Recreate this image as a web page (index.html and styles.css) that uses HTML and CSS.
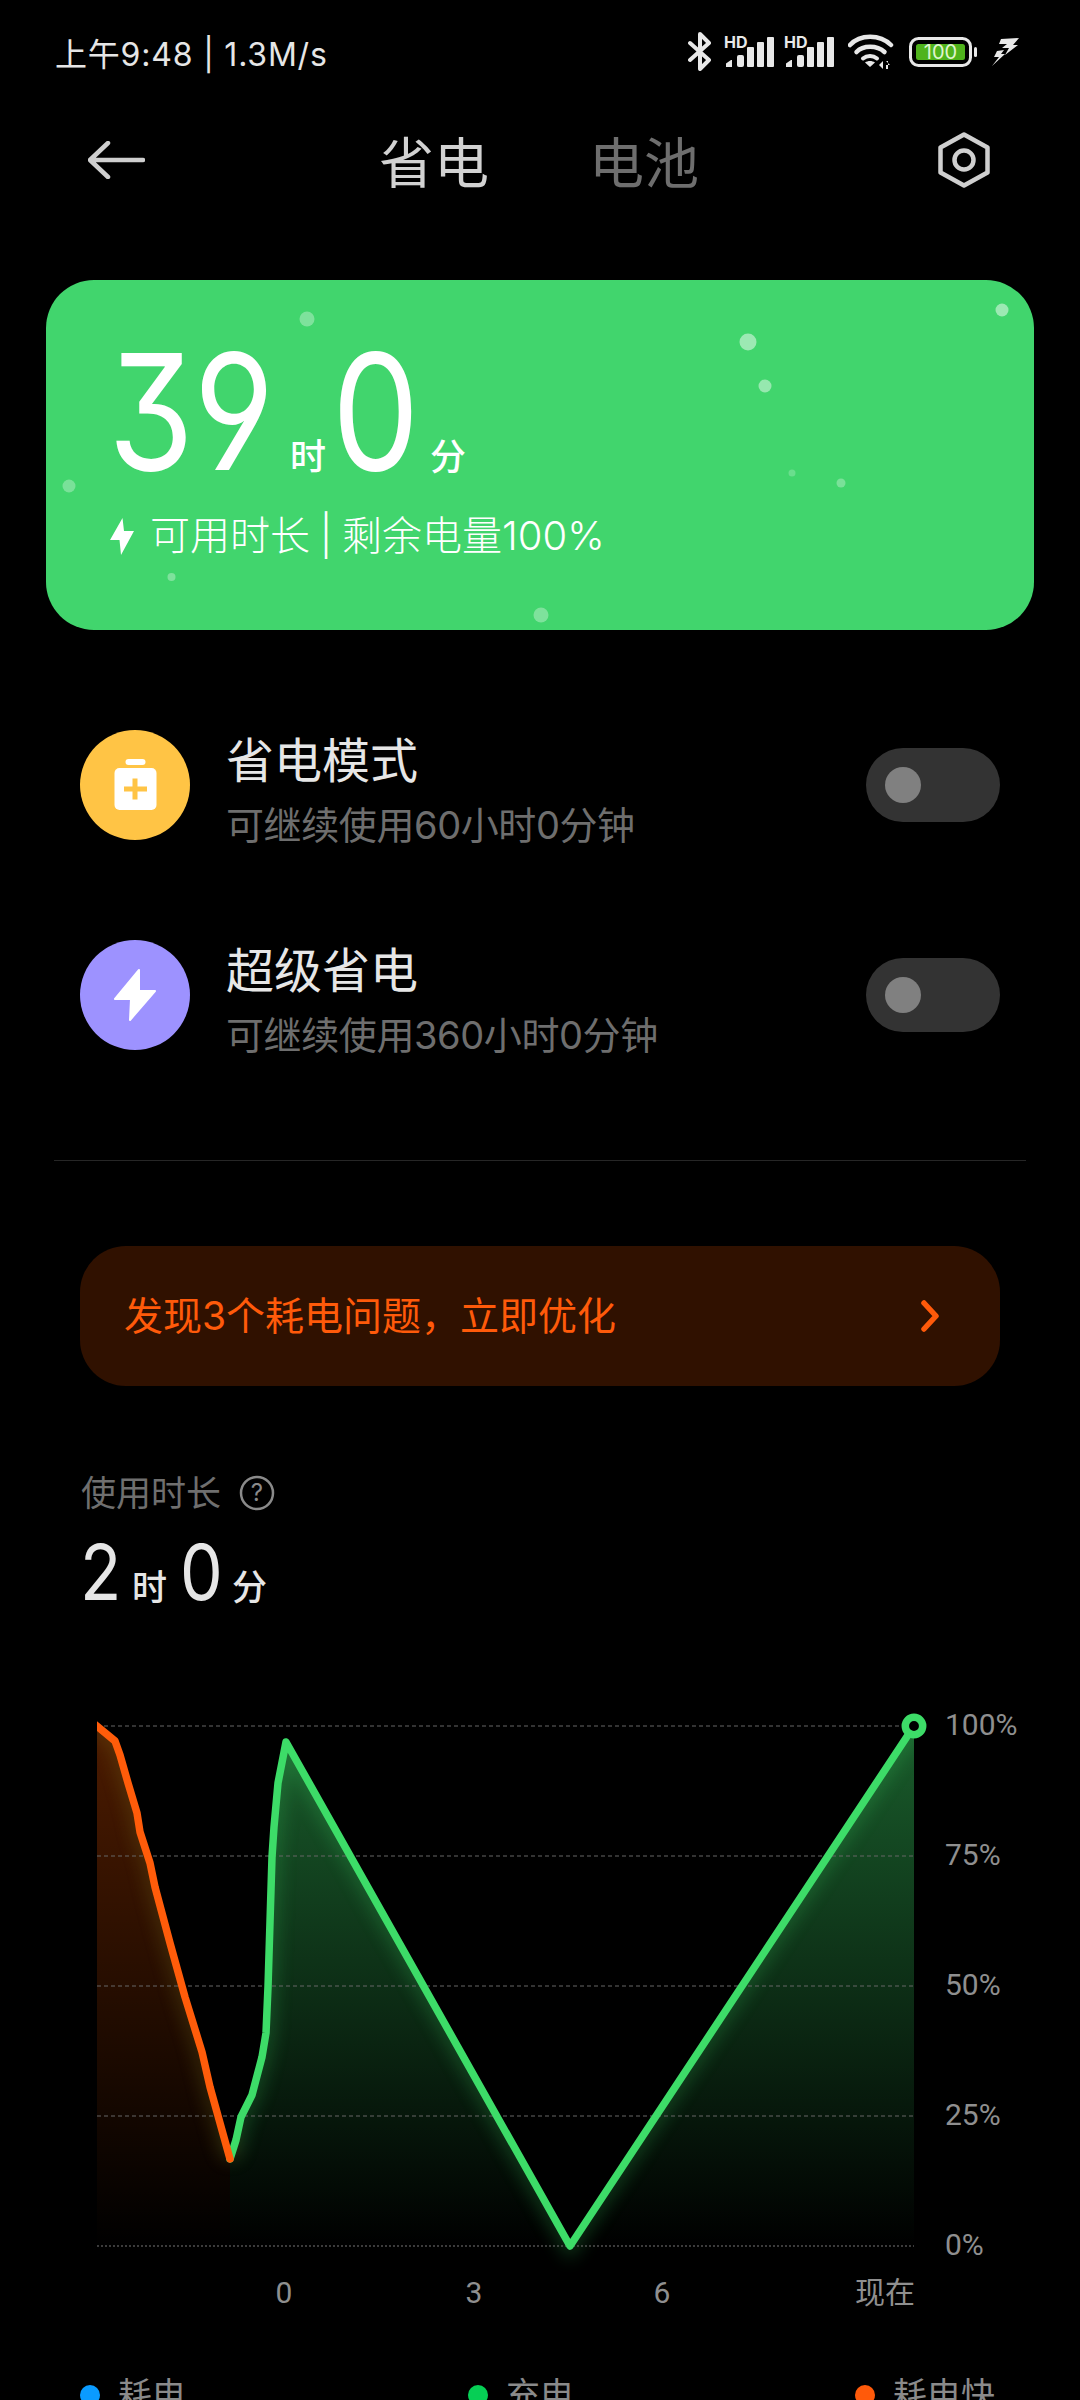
FILE: index.html
```html
<!DOCTYPE html>
<html lang="zh-CN">
<head>
<meta charset="utf-8">
<title>省电与电池</title>
<link rel="stylesheet" href="styles.css">
</head>
<body>
<div class="screen">
  <header class="status">
    <span class="status-text">上午9:48 | 1.3M/s</span>
    <div class="status-icons">
      <svg class="ic-bt" width="24" height="39" viewBox="0 0 24 39"><path d="M2 11 21 28 12 37V2L21 11 2 28" fill="none" stroke="#e8e8e8" stroke-width="4" stroke-linejoin="round" stroke-linecap="round"/></svg>
      <svg class="ic-sig" width="51" height="38" viewBox="0 -7 51 38"><text x="0" y="11" class="hd">HD</text><g fill="#e8e8e8"><path d="M2 30v-3.500l5-3.500h1v7z"/><rect x="13" y="18" width="7" height="12" rx="2"/><rect x="23" y="10" width="7" height="20" rx="1"/><rect x="33" y="5" width="7" height="25" rx="1"/><rect x="43" y="0" width="7" height="30" rx="1"/></g></svg>
      <svg class="ic-sig ic-sig2" width="51" height="38" viewBox="0 -7 51 38"><text x="0" y="11" class="hd">HD</text><g fill="#e8e8e8"><path d="M2 30v-3.500l5-3.500h1v7z"/><rect x="13" y="18" width="7" height="12" rx="2"/><rect x="23" y="10" width="7" height="20" rx="1"/><rect x="33" y="5" width="7" height="25" rx="1"/><rect x="43" y="0" width="7" height="30" rx="1"/></g></svg>
      <svg class="ic-wifi" width="46" height="36" viewBox="0 0 46 36"><g fill="none" stroke="#e8e8e8" stroke-linecap="round"><path d="M2 11C12 0 32 0 43 11" stroke-width="4.500"/><path d="M8.500 18C15 11 29 11 36.500 18" stroke-width="4.500"/><path d="M15 24.500C19 21 25 21 29 24.500" stroke-width="4"/></g><path d="M22 33l-5-4.500c3-2 7-2 10 0z" fill="#e8e8e8"/><path d="M31 31l4-4v8zM38 27l4 4-4 0zM38 27v8h2v-8z" fill="#e8e8e8"/></svg>
      <svg class="ic-bat" width="68" height="30" viewBox="0 0 68 30"><rect x="1.500" y="1.500" width="60" height="27" rx="8" fill="none" stroke="#e8e8e8" stroke-width="3"/><rect x="7" y="7" width="49" height="16" rx="2.500" fill="#4fb31c"/><text x="31.500" y="22" class="bat-num">100</text><rect x="65" y="10" width="3" height="10" rx="1.500" fill="#e8e8e8"/></svg>
      <svg class="ic-flash" width="27" height="29" viewBox="0 0 27 29"><path d="M9 1 27 0 21 7H26L13 17 17 10H10L15 6H7Z" fill="#e8e8e8"/><path d="M5 13 12 12 9 16H13L0 28 7 19H2Z" fill="#e8e8e8"/></svg>
    </div>
  </header>

  <nav class="nav">
    <svg class="back" width="57" height="38" viewBox="0 0 57 38"><path d="M20 2 2 19l18 17M3 19h52" fill="none" stroke="#cfcfcf" stroke-width="4.500" stroke-linecap="round" stroke-linejoin="round"/></svg>
    <div class="tabs"><span class="tab tab-on">省电</span><span class="tab">电池</span></div>
    <svg class="gear" width="52" height="56" viewBox="0 0 52 56"><path d="M26 2.500 49.500 15.500V40.500L26 53.500 2.500 40.500V15.500Z" fill="none" stroke="#cfcfcf" stroke-width="4.500" stroke-linejoin="round"/><circle cx="26" cy="28" r="9.500" fill="none" stroke="#cfcfcf" stroke-width="4.500"/></svg>
  </nav>

  <section class="card">
    <svg class="sparkles" width="988" height="350" viewBox="46 280 988 350">
      <g fill="#fff">
        <circle cx="307" cy="319" r="7.500" opacity=".32"/>
        <circle cx="69" cy="486" r="6.500" opacity=".3"/>
        <circle cx="171.500" cy="577" r="4" opacity=".32"/>
        <circle cx="541" cy="615" r="7.500" opacity=".32"/>
        <circle cx="264" cy="525" r="5" opacity=".15"/>
        <circle cx="1002" cy="310" r="6.500" opacity=".48"/>
        <circle cx="748" cy="342" r="8.500" opacity=".48"/>
        <circle cx="765" cy="386" r="6.500" opacity=".45"/>
        <circle cx="792" cy="473" r="3.500" opacity=".22"/>
        <circle cx="841" cy="483" r="4.500" opacity=".3"/>
      </g>
    </svg>
    <div class="time">
      <span class="num num-wide">39</span><span class="unit">时</span><span class="num num-one">0</span><span class="unit">分</span>
    </div>
    <div class="remain">
      <svg class="bolt" width="24" height="37" viewBox="0 0 24 37"><path d="M12.500 0 0 22H9.500L11 37 24 13H14Z" fill="#fff"/></svg>
      <span>可用时长 | 剩余电量100%</span>
    </div>
  </section>

  <section class="modes">
    <div class="mode">
      <div class="mode-icon mode-yellow">
        <svg width="110" height="110" viewBox="0 0 110 110"><rect x="45.500" y="29" width="20" height="6" rx="3" fill="#fff"/><rect x="34.500" y="38" width="42" height="42" rx="5" fill="#fff"/><path d="M44 59H67M55 48.500V69.500" stroke="#ffc445" stroke-width="5"/></svg>
      </div>
      <div class="mode-text"><div class="mode-title">省电模式</div><div class="mode-sub">可继续使用60小时0分钟</div></div>
      <div class="toggle"><span class="knob"></span></div>
    </div>
    <div class="mode">
      <div class="mode-icon mode-purple">
        <svg width="110" height="110" viewBox="0 0 110 110"><path d="M59 30 35 59H51L50 80 75 51H59Z" fill="#fff" stroke="#fff" stroke-width="2" stroke-linejoin="round"/></svg>
      </div>
      <div class="mode-text"><div class="mode-title">超级省电</div><div class="mode-sub">可继续使用360小时0分钟</div></div>
      <div class="toggle"><span class="knob"></span></div>
    </div>
  </section>

  <hr class="divider">

  <a class="banner">
    <span class="banner-text">发现3个耗电问题，立即优化</span>
    <svg width="20" height="32" viewBox="0 0 20 32"><path d="M4 3 16 16 4 29" fill="none" stroke="#ff5a0a" stroke-width="5.500" stroke-linecap="round" stroke-linejoin="round"/></svg>
  </a>

  <section class="usage">
    <div class="usage-label"><span>使用时长</span>
      <svg width="36" height="36" viewBox="0 0 36 36"><circle cx="18" cy="18" r="16" fill="none" stroke="#8a8a8a" stroke-width="2.500"/><text x="18" y="26" class="help">?</text></svg>
    </div>
    <div class="usage-time"><span class="unum">2</span><span class="uunit">时</span><span class="unum">0</span><span class="uunit">分</span></div>
  </section>

  <svg class="chart" width="1080" height="660" viewBox="0 1670 1080 660">
    <defs>
      <linearGradient id="gf" gradientUnits="userSpaceOnUse" x1="0" y1="1726" x2="0" y2="2246"><stop offset="0" stop-color="#3ddc68" stop-opacity=".42"/><stop offset="1" stop-color="#3ddc68" stop-opacity="0"/></linearGradient>
      <linearGradient id="of" gradientUnits="userSpaceOnUse" x1="0" y1="1726" x2="0" y2="2246"><stop offset="0" stop-color="#ff5a00" stop-opacity=".3"/><stop offset="1" stop-color="#ff5a00" stop-opacity="0"/></linearGradient>
      <filter id="soft" x="-20%" y="-20%" width="140%" height="140%"><feGaussianBlur stdDeviation="9"/></filter>
      <clipPath id="under"><path d="M97 1726 115 1741 120 1755 128 1783 137 1813 140 1832 150 1863 155 1887 170 1943 185 1997 202 2052 210 2087 230 2159 236 2140 241 2117 252 2095 262 2057 266 2033 268 1987 272 1857 274 1827 278 1783 286 1742 570 2246 914 1726V2300H97Z"/></clipPath>
      <clipPath id="plot"><rect x="97" y="1680" width="860" height="620"/></clipPath>
    </defs>
    <path d="M230 2159 236 2140 241 2117 252 2095 262 2057 266 2033 268 1987 272 1857 274 1827 278 1783 286 1742 570 2246 914 1726V2246H230Z" fill="url(#gf)"/>
    <path d="M97 1726 115 1741 120 1755 128 1783 137 1813 140 1832 150 1863 155 1887 170 1943 185 1997 202 2052 210 2087 230 2159V2246H97Z" fill="url(#of)"/>
    <g clip-path="url(#under)">
      <g filter="url(#soft)" fill="none" stroke-width="16" opacity=".24">
        <path d="M230 2159 236 2140 241 2117 252 2095 262 2057 266 2033 268 1987 272 1857 274 1827 278 1783 286 1742 570 2246 914 1726" stroke="#3ddc68"/>
        <path d="M97 1726 115 1741 120 1755 128 1783 137 1813 140 1832 150 1863 155 1887 170 1943 185 1997 202 2052 210 2087 230 2159" stroke="#8f8a20"/>
      </g>
    </g>
    <g class="grid">
      <line x1="97" x2="914" y1="1726" y2="1726"/>
      <line x1="97" x2="914" y1="1856" y2="1856"/>
      <line x1="97" x2="914" y1="1986" y2="1986"/>
      <line x1="97" x2="914" y1="2116" y2="2116"/>
      <line x1="97" x2="914" y1="2246" y2="2246" class="grid-base"/>
    </g>
    <path d="M230 2159 236 2140 241 2117 252 2095 262 2057 266 2033 268 1987 272 1857 274 1827 278 1783 286 1742 570 2246 914 1726" fill="none" stroke="#3ddc68" stroke-width="7.500" stroke-linejoin="round" stroke-linecap="round"/>
    <g clip-path="url(#plot)"><path d="M92 1722 115 1741 120 1755 128 1783 137 1813 140 1832 150 1863 155 1887 170 1943 185 1997 202 2052 210 2087 230 2159" fill="none" stroke="#ff5c0a" stroke-width="7.500" stroke-linejoin="round" stroke-linecap="round"/></g>
    <circle cx="914" cy="1726" r="8.700" fill="#000" stroke="#3ddc68" stroke-width="7.500"/>
    <g class="axis">
      <text x="945" y="1735">100%</text>
      <text x="945" y="1865">75%</text>
      <text x="945" y="1995">50%</text>
      <text x="945" y="2125">25%</text>
      <text x="945" y="2255">0%</text>
      <text x="284" y="2303" class="mid">0</text>
      <text x="474" y="2303" class="mid">3</text>
      <text x="662" y="2303" class="mid">6</text>
      <text x="915" y="2303" class="end">现在</text>
    </g>
  </svg>

  <div class="legend">
    <div class="legend-item"><span class="ldot ldot-blue"></span>耗电</div>
    <div class="legend-item"><span class="ldot ldot-green"></span>充电</div>
    <div class="legend-item"><span class="ldot ldot-orange"></span>耗电快</div>
  </div>
</div>
</body>
</html>
```
FILE: styles.css
```css
* { box-sizing: border-box; }
html, body { margin: 0; padding: 0; background: #000; }
body { font-family: Inter, "Noto Sans CJK SC", sans-serif; color: #e6e6e6; }
.screen { width: 1080px; height: 2400px; overflow: hidden; background: #000; }

.status { height: 104px; display: flex; align-items: center; justify-content: space-between; padding: 0 61px 0 55px; }
.status-text { font-size: 32px; letter-spacing: .8px; color: #e6e6e6; }
.status-icons { display: flex; align-items: center; }
.status-icons svg { display: block; }
.ic-bt { margin-top: -1px; }
.ic-sig { margin-left: 12px; margin-bottom: 7px; }
.ic-sig2 { margin-left: 9px; }
.ic-wifi { margin-left: 13px; }
.ic-bat { margin-left: 15px; }
.ic-flash { margin-left: 15px; }
.hd { font-size: 16px; font-weight: 700; fill: #e8e8e8; }
.bat-num { font-size: 20px; fill: #dff5cf; text-anchor: middle; }

.nav { height: 112px; display: grid; grid-template-columns: 1fr auto 1fr; align-items: center; padding: 0 90px 0 88px; }
.gear { justify-self: end; }
.back { justify-self: start; }
.tabs { display: flex; gap: 100px; padding-top: 6px; }
.tab { font-size: 55px; font-weight: 400; color: #6e6e6e; line-height: 1.2; }
.tab-on { color: #d2d2d2; }

.card { position: relative; margin: 64px 46px 0; height: 350px; border-radius: 48px; background: #41d56d; color: #fff; padding: 51px 0 0 62px; overflow: hidden; }
.sparkles { position: absolute; left: 0; top: 0; }
.time { position: relative; display: flex; align-items: baseline; height: 161px; }
.num { display: inline-block; font-size: 161px; line-height: 161px; font-weight: 400; font-feature-settings: "cv03", "cv04", "cv09"; transform: scaleX(.86); transform-origin: left center; }
.num-wide { width: 182px; }
.num-one { width: 98px; margin-left: 6px; }
.unit { font-size: 36px; font-weight: 500; }
.remain { position: relative; display: flex; align-items: center; gap: 16px; margin: 20px 0 0 2px; font-size: 40px; font-weight: 300; line-height: 48px; word-spacing: -1.500px; }

.modes { margin: 100px 80px 0; display: flex; flex-direction: column; gap: 100px; }
.mode { display: flex; align-items: flex-start; height: 110px; }
.mode-icon { width: 110px; height: 110px; border-radius: 50%; flex: none; }
.mode-icon svg { display: block; }
.mode-yellow { background: #ffc445; }
.mode-purple { background: #9d92ff; }
.mode-text { margin-left: 36px; flex: 1; padding-top: 2px; }
.mode-title { font-size: 48px; font-weight: 400; line-height: 58px; color: #e6e6e6; }
.mode-sub { font-size: 38px; letter-spacing: -.4px; line-height: 44px; color: #6e6e6e; margin-top: 13px; font-weight: 400; }
.toggle { width: 134px; height: 74px; border-radius: 37px; background: #333; margin-top: 18px; padding: 19px 0 0 19px; flex: none; }
.knob { display: block; width: 36px; height: 36px; border-radius: 50%; background: #808080; }

.divider { margin: 110px 54px 0; border: 0; height: 1px; background: #262626; }

.banner { display: flex; align-items: center; justify-content: space-between; margin: 85px 80px 0; height: 140px; border-radius: 46px; background: #301100; padding: 0 60px 0 44px; color: #ff5a0a; font-size: 39px; }
.banner-text { padding-bottom: 6px; }

.usage { margin: 87px 0 0 81px; }
.usage-label { display: flex; align-items: center; gap: 18px; font-size: 35px; line-height: 40px; color: #6f6f6f; }
.help { font-size: 24px; fill: #8a8a8a; text-anchor: middle; }
.usage-time { display: flex; align-items: baseline; margin: 19px 0 0 -1px; }
.unum { display: inline-block; font-size: 77px; line-height: 80px; transform: scaleX(.88); transform-origin: left center; width: 43px; }
.uunit { font-size: 35px; font-weight: 500; margin: 0 13px 0 9px; }

.chart { display: block; margin-top: 58px; }
.grid line { stroke: #666; stroke-width: 1; stroke-dasharray: 4 3; }
.grid .grid-base { stroke: #777; stroke-dasharray: 2 2; }
.axis text { font-family: Roboto, "Noto Sans CJK SC", sans-serif; font-size: 30px; fill: #8f8f8f; }
.axis .mid { text-anchor: middle; }
.axis .end { text-anchor: end; }

.legend { display: grid; grid-template-columns: 388px 387px 1fr; padding-left: 80px; margin-top: 42px; font-size: 34px; line-height: 46px; color: #8a8a8a; }
.legend-item { display: flex; align-items: center; gap: 18px; }
.ldot { width: 20px; height: 20px; border-radius: 50%; flex: none; }
.ldot-blue { background: #0a9bff; }
.ldot-green { background: #06cf55; }
.ldot-orange { background: #ff5a0a; }
```
